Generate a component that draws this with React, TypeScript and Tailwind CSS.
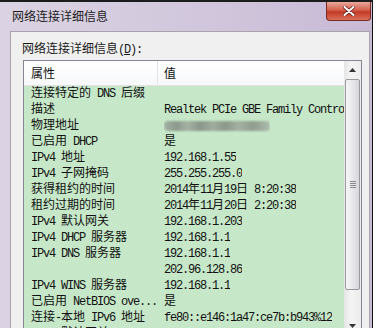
import React from "react";

const rows: [string, string][] = [
  ["连接特定的 DNS 后缀", ""],
  ["描述", "Realtek PCIe GBE Family Controller"],
  ["物理地址", "__mac__"],
  ["已启用 DHCP", "是"],
  ["IPv4 地址", "192.168.1.55"],
  ["IPv4 子网掩码", "255.255.255.0"],
  ["获得租约的时间", "2014年11月19日 8:20:38"],
  ["租约过期的时间", "2014年11月20日 2:20:38"],
  ["IPv4 默认网关", "192.168.1.203"],
  ["IPv4 DHCP 服务器", "192.168.1.1"],
  ["IPv4 DNS 服务器", "192.168.1.1"],
  ["", "202.96.128.86"],
  ["IPv4 WINS 服务器", "192.168.1.1"],
  ["已启用 NetBIOS ove...", "是"],
  ["连接-本地 IPv6 地址", "fe80::e146:1a47:ce7b:b943%12"],
  ["IPv6 默认网关", ""],
];

// ascii runs get the narrow SimSun-like spacing, CJK keeps full width
function Mixed({ text }: { text: string }) {
  const parts = text.split(/([\x20-\x7e]+)/).filter(Boolean);
  return (
    <>
      {parts.map((p, i) =>
        /^[\x20-\x7e]+$/.test(p) ? (
          <span key={i} className="tracking-[-1.2px]">
            {p}
          </span>
        ) : (
          <span key={i}>{p}</span>
        )
      )}
    </>
  );
}

function BlurredMac() {
  return (
    <div className="mt-[3px] h-[10px] w-[106px] rounded-[4px] bg-[linear-gradient(90deg,#9aa59a_0%,#7e877e_12%,#9ba69b_22%,#7a847a_34%,#949f94_46%,#7c867c_58%,#99a499_70%,#828c82_84%,#a6b1a6_100%)] opacity-80 blur-[0.8px]" />
  );
}

function Scrollbar() {
  return (
    <div className="flex w-[17px] shrink-0 flex-col bg-[linear-gradient(90deg,#e6e6e6,#f4f4f4_40%,#ececec)]">
      <div className="flex h-[17px] items-center justify-center">
        <svg width="7" height="4" viewBox="0 0 7 4">
          <path d="M3.5 0 L7 4 L0 4 Z" fill="#333" />
        </svg>
      </div>
      <div className="mx-[1px] mt-[1px] flex h-[211px] items-center justify-center rounded-[2px] border border-[#9a9a9e] bg-[linear-gradient(90deg,#f6f6f7,#e9e9ec_45%,#d6d6dc)]">
        <div className="flex flex-col gap-[1px]">
          <div className="h-px w-[6px] bg-[#8a8a90]" />
          <div className="h-px w-[6px] bg-[#8a8a90]" />
          <div className="h-px w-[6px] bg-[#8a8a90]" />
          <div className="h-px w-[6px] bg-[#8a8a90]" />
        </div>
      </div>
      <div className="flex-1" />
      <div className="flex h-[17px] items-center justify-center">
        <svg width="7" height="4" viewBox="0 0 7 4">
          <path d="M0 0 L7 0 L3.5 4 Z" fill="#333" />
        </svg>
      </div>
    </div>
  );
}

export default function App() {
  return (
    <div className="h-[328px] w-[378px] overflow-hidden bg-white font-['Noto_Sans_CJK_SC',sans-serif]">
      <div className="flex h-[340px] w-[373px] flex-col border-t-2 border-r border-t-[#1c1c1c] border-r-[#111] bg-[linear-gradient(90deg,#dbd3e3,#d0c5db_60%,#c8b9d5)]">
        <div className="flex h-[29px] shrink-0 items-start">
          <span className="mt-[6px] pl-[12px] text-[12px] leading-[16px] text-[#1d1d1d]">
            网络连接详细信息
          </span>
          <div className="ml-auto mr-[1px] flex h-[19px] w-[45px] items-center justify-center rounded-b-[4px] border border-t-0 border-[#7a2a22] bg-[linear-gradient(180deg,#e9a99c,#d5604c_45%,#c23a26_55%,#d9705a)]">
            <svg width="12" height="10" viewBox="0 0 12 10">
              <path
                d="M1.5 1 L10.5 9 M10.5 1 L1.5 9"
                stroke="#5a1a14"
                strokeWidth="3.4"
                strokeLinecap="round"
              />
              <path
                d="M1.5 1 L10.5 9 M10.5 1 L1.5 9"
                stroke="#ffffff"
                strokeWidth="2"
                strokeLinecap="round"
              />
            </svg>
          </div>
        </div>
        <div className="flex min-w-0 flex-1 pl-[10px] pr-[2px]">
          <div className="flex min-w-0 flex-1 flex-col border-x border-t border-[#a6a3ae] bg-[#f0f0f0]">
            <div className="mt-[10px] pl-[11px] font-['Liberation_Mono','Noto_Sans_CJK_SC',monospace] text-[12px] leading-[16px] text-[#1a1a1a]">
              <span>网络连接详细信息</span>
              <span className="tracking-[-1.2px]">
                (<span className="underline">D</span>):
              </span>
            </div>
            <div className="ml-[12px] mr-[7px] mt-[2px] flex h-[275px] min-w-0 border border-[#828790] bg-white">
              <div className="flex min-w-0 flex-1 flex-col overflow-hidden">
                <div className="flex h-[25px] shrink-0 items-center border-b border-[#e2e2e2] bg-[linear-gradient(180deg,#ffffff,#f7f8fa)] text-[12px] text-[#111]">
                  <div className="flex h-full w-[134px] items-center border-r border-[#e2e3ea] pl-[7px]">
                    属性
                  </div>
                  <div className="pl-[6px]">值</div>
                </div>
                <div className="flex-1 bg-[#c7e8c8] font-['Liberation_Mono','Noto_Sans_CJK_SC',monospace] text-[12px] leading-[16px] text-[#111]">
                  {rows.map(([k, v], i) => (
                    <div key={i} className="flex h-[16px] whitespace-nowrap">
                      <div className="w-[140px] shrink-0 overflow-hidden pl-[7px]">
                        <Mixed text={k} />
                      </div>
                      <div className="min-w-0 overflow-hidden">
                        {v === "__mac__" ? <BlurredMac /> : <Mixed text={v} />}
                      </div>
                    </div>
                  ))}
                </div>
              </div>
              <Scrollbar />
            </div>
          </div>
        </div>
      </div>
    </div>
  );
}
